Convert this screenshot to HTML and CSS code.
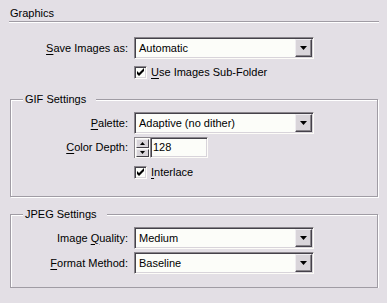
FILE: index.html
```html
<!DOCTYPE html>
<html lang="en">
<head>
    <meta charset="UTF-8">
    <title>Graphics</title>
    <link rel="stylesheet" href="styles.css">
</head>
<body>
    <div class="title">Graphics</div>
    <div class="sep"></div>

    <div class="row first">
        <label class="lbl"><u>S</u>ave Images as:</label>
        <div class="select">
            <span class="select-val">Automatic</span>
            <span class="select-btn"><svg width="7" height="4" viewBox="0 0 7 4"><path d="M0 0h7L3.5 4z" fill="#000"/></svg></span>
        </div>
    </div>
    <div class="row check-row">
        <span></span>
        <label class="check">
            <span class="box"><svg width="9" height="9" viewBox="0 0 9 9"><path d="M1 3v3l2 2 5-5V0L3 5z" fill="#000"/></svg></span>
            <span><u>U</u>se Images Sub-Folder</span>
        </label>
    </div>

    <fieldset class="group gif">
        <legend>GIF Settings</legend>
        <div class="row">
            <label class="lbl"><u>P</u>alette:</label>
            <div class="select">
                <span class="select-val">Adaptive (no dither)</span>
                <span class="select-btn"><svg width="7" height="4" viewBox="0 0 7 4"><path d="M0 0h7L3.5 4z" fill="#000"/></svg></span>
            </div>
        </div>
        <div class="row depth-row">
            <label class="lbl"><u>C</u>olor Depth:</label>
            <div class="depth">
                <div class="spin">
                    <span class="spin-btn"><svg width="5" height="3" viewBox="0 0 5 3"><path d="M0 3h5L2.5 0z" fill="#000"/></svg></span>
                    <span class="spin-btn"><svg width="5" height="3" viewBox="0 0 5 3"><path d="M0 0h5L2.5 3z" fill="#000"/></svg></span>
                </div>
                <div class="field">128</div>
            </div>
        </div>
        <div class="row check-row">
            <span></span>
            <label class="check">
                <span class="box"><svg width="9" height="9" viewBox="0 0 9 9"><path d="M1 3v3l2 2 5-5V0L3 5z" fill="#000"/></svg></span>
                <span><u>I</u>nterlace</span>
            </label>
        </div>
    </fieldset>

    <fieldset class="group jpeg">
        <legend>JPEG Settings</legend>
        <div class="row">
            <label class="lbl">Image <u>Q</u>uality:</label>
            <div class="select">
                <span class="select-val">Medium</span>
                <span class="select-btn"><svg width="7" height="4" viewBox="0 0 7 4"><path d="M0 0h7L3.5 4z" fill="#000"/></svg></span>
            </div>
        </div>
        <div class="row second">
            <label class="lbl"><u>F</u>ormat Method:</label>
            <div class="select">
                <span class="select-val">Baseline</span>
                <span class="select-btn"><svg width="7" height="4" viewBox="0 0 7 4"><path d="M0 0h7L3.5 4z" fill="#000"/></svg></span>
            </div>
        </div>
    </fieldset>
</body>
</html>
```

FILE: styles.css
```css
body {
    margin: 0;
    background: #e3dfe5;
    font-family: "Liberation Sans", Arial, sans-serif;
    font-size: 11px;
    line-height: 13px;
    color: #000;
}
u {
    text-decoration-thickness: 1px;
    text-underline-offset: 2px;
}
.title {
    padding: 7px 0 0 10px;
}
.sep {
    margin: 1px 8px 0 9px;
    height: 1px;
    background: #a09ca4;
    border-bottom: 1px solid #fff;
}
.row {
    --lw: 128px;
    display: grid;
    grid-template-columns: var(--lw) auto;
    column-gap: 6px;
    align-items: center;
    justify-items: start;
}
.row.first {
    margin-top: 14px;
}
.check-row {
    margin-top: 7px;
}
.lbl {
    justify-self: end;
    white-space: nowrap;
}

/* dropdown */
.select {
    box-sizing: border-box;
    width: 180px;
    height: 22px;
    display: flex;
    align-items: center;
    background: #fcfdf9;
    border: 1px solid;
    border-color: #8a868c #fdfcf8 #fdfcf8 #8a868c;
    box-shadow: inset 1px 1px #45424a, inset -1px -1px #d8d4da;
}
.select-val {
    flex: 1;
    padding-left: 4px;
}
.select-btn {
    box-sizing: border-box;
    width: 17px;
    height: 18px;
    margin-right: 1px;
    display: flex;
    align-items: center;
    justify-content: center;
    background: #d9d5da;
    border: 1px solid;
    border-color: #efedf0 #45424a #45424a #efedf0;
    box-shadow: inset -1px -1px #8a868c;
}
.select-btn svg {
    margin-top: -1px;
}

/* checkbox */
.check {
    display: flex;
    align-items: center;
    gap: 4px;
}
.box {
    box-sizing: border-box;
    width: 13px;
    height: 13px;
    display: flex;
    align-items: center;
    justify-content: center;
    background: #fcfdf9;
    border: 1px solid;
    border-color: #8a868c #fdfcf8 #fdfcf8 #8a868c;
    box-shadow: inset 1px 1px #45424a, inset -1px -1px #d8d4da;
}

/* group boxes */
.group {
    margin: 14px 9px 0 10px;
    padding: 6px 0 17px 0;
    min-width: 0;
    border: 1px solid #a09ca4;
    box-shadow: inset 1px 1px #fff, 1px 1px #fff;
}
.group .row {
    --lw: 117px;
}
.group legend {
    margin-left: 12px;
    padding: 0 10px 0 2px;
    background: #e3dfe5;
}
.group.jpeg {
    margin-top: 11px;
    padding-bottom: 13px;
}
.depth-row {
    margin-top: 3px;
}
.gif .check-row {
    margin-top: 8px;
}
.second {
    margin-top: 3px;
}

/* colour depth spinner */
.depth {
    display: flex;
    height: 21px;
}
.spin {
    box-sizing: border-box;
    width: 16px;
    display: flex;
    flex-direction: column;
    gap: 1px;
    padding: 1px 1px 1px 1px;
    background: #fdfcf8;
    border-left: 1px solid #8a868c;
    border-top: 1px solid #8a868c;
}
.spin-btn {
    flex: 1;
    display: flex;
    align-items: center;
    justify-content: center;
    background: #d9d5da;
    border: 1px solid;
    border-color: #efedf0 #45424a #45424a #efedf0;
}
.field {
    box-sizing: border-box;
    width: 58px;
    padding: 3px 0 0 2px;
    background: #fcfdf9;
    border: 1px solid;
    border-color: #8a868c #fdfcf8 #fdfcf8 #8a868c;
    box-shadow: inset 1px 1px #45424a, inset -1px -1px #d8d4da;
}
```
